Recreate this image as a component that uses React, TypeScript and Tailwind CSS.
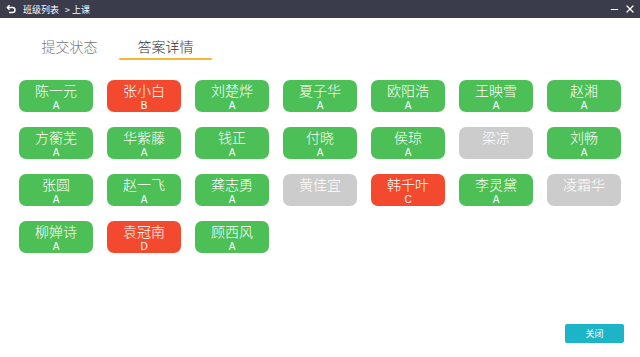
import { X, Minus } from "lucide-react"

type Student = { name: string; grade?: string; tone: "ok" | "wrong" | "none" }

const students: Student[] = [
    { name: "陈一元", grade: "A", tone: "ok" },
    { name: "张小白", grade: "B", tone: "wrong" },
    { name: "刘楚烨", grade: "A", tone: "ok" },
    { name: "夏子华", grade: "A", tone: "ok" },
    { name: "欧阳浩", grade: "A", tone: "ok" },
    { name: "王映雪", grade: "A", tone: "ok" },
    { name: "赵湘", grade: "A", tone: "ok" },
    { name: "方蘅芜", grade: "A", tone: "ok" },
    { name: "华紫藤", grade: "A", tone: "ok" },
    { name: "钱正", grade: "A", tone: "ok" },
    { name: "付晓", grade: "A", tone: "ok" },
    { name: "侯琼", grade: "A", tone: "ok" },
    { name: "梁凉", tone: "none" },
    { name: "刘畅", grade: "A", tone: "ok" },
    { name: "张圆", grade: "A", tone: "ok" },
    { name: "赵一飞", grade: "A", tone: "ok" },
    { name: "龚志勇", grade: "A", tone: "ok" },
    { name: "黄佳宜", tone: "none" },
    { name: "韩千叶", grade: "C", tone: "wrong" },
    { name: "李灵黛", grade: "A", tone: "ok" },
    { name: "凌霜华", tone: "none" },
    { name: "柳婵诗", grade: "A", tone: "ok" },
    { name: "袁冠南", grade: "D", tone: "wrong" },
    { name: "顾西风", grade: "A", tone: "ok" },
]

const toneClass = {
    ok: "bg-[#4cbf56]",
    wrong: "bg-[#f2492f]",
    none: "bg-[#cccccc] text-[#f2f2f2]",
}

function StudentCard({ s }: { s: Student }) {
    return (
        <div className={`h-[32px] rounded-[7px] text-white flex flex-col items-center pt-[1px] ${toneClass[s.tone]}`}>
            <span className="text-[14px] leading-[19px] font-light">{s.name}</span>
            {s.grade && <span className="text-[10px] leading-[11px]" style={{ fontFamily: '"Liberation Sans", sans-serif' }}>{s.grade}</span>}
        </div>
    )
}

export default function App() {
    return (
        <div
            className="w-[640px] h-[357px] bg-white flex flex-col relative"
            style={{ fontFamily: '"Noto Sans CJK SC", "Noto Sans", sans-serif' }}
        >
            {/* title bar */}
            <div className="h-[18px] bg-[#3b3c4b] flex items-center text-white shrink-0">
                <svg className="ml-[6px] w-[10px] h-[10px]" viewBox="0 0 10 10" fill="none" stroke="white" strokeWidth="1.4">
                    <path d="M1.5 3.5h5a2.5 2.5 0 0 1 0 5H3" />
                    <path d="M3.5 1.2 1.3 3.5l2.2 2.2" />
                </svg>
                <span className="ml-[7px] text-[9px] leading-none">班级列表</span>
                <span className="ml-[6px] text-[9px] leading-none">&gt; 上课</span>
                <div className="ml-auto mr-[4px] flex items-center gap-[4px]">
                    <Minus className="w-[11px] h-[11px]" strokeWidth={2.5} />
                    <X className="w-[12px] h-[12px]" strokeWidth={2.5} />
                </div>
            </div>

            {/* tabs */}
            <div className="flex mt-[19px] ml-[20px]">
                <div className="w-[99px] flex flex-col items-center">
                    <span className="text-[14px] leading-[19px] text-[#777777] font-light">提交状态</span>
                </div>
                <div className="w-[93px] flex flex-col items-center">
                    <span className="text-[14px] leading-[19px] text-[#333333] font-light">答案详情</span>
                    <div className="mt-[2px] h-[2px] w-full bg-[#f4b73a] rounded-full" />
                </div>
            </div>

            {/* cards */}
            <div className="grid grid-cols-7 gap-x-[14px] gap-y-[15px] w-[602px] ml-[19px] mt-[20px]">
                {students.map(s => (
                    <StudentCard key={s.name} s={s} />
                ))}
            </div>

            <div className="mt-auto mb-[14px] mr-[16px] flex justify-end">
                <button className="w-[59px] h-[19px] bg-[#1eb4c8] rounded-[2px] text-white text-[9px] leading-none">
                    关闭
                </button>
            </div>
        </div>
    )
}
